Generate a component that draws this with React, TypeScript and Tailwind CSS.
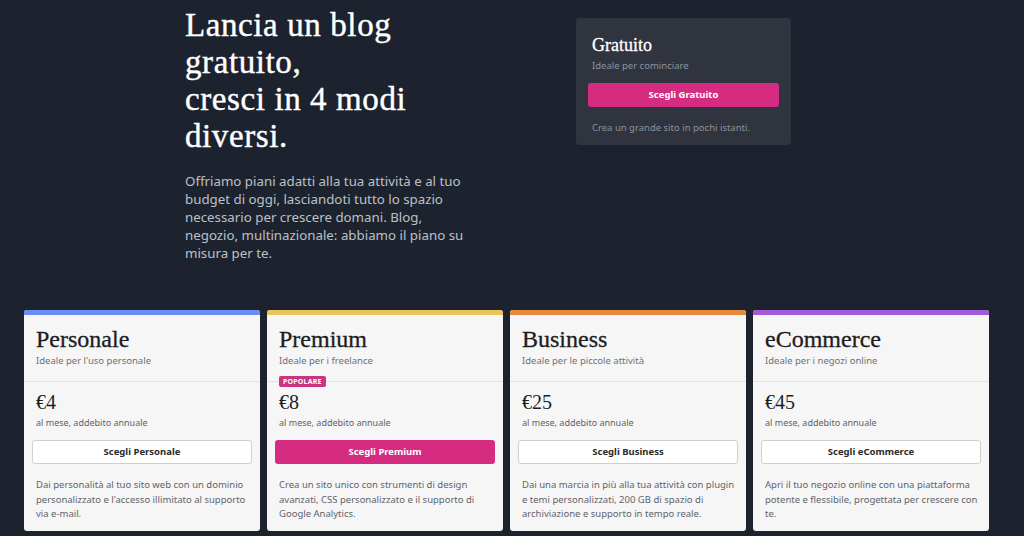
import React from "react";

const serif = { fontFamily: '"Liberation Serif", "DejaVu Serif", serif' };

type Plan = {
  name: string;
  sub: string;
  price: string;
  bar: string;
  cta: string;
  desc: string[];
  primary?: boolean;
  badge?: boolean;
};

const plans: Plan[] = [
  {
    name: "Personale",
    sub: "Ideale per l'uso personale",
    price: "€4",
    bar: "bg-[#6b8cf0]",
    cta: "Scegli Personale",
    desc: [
      "Dai personalità al tuo sito web con un dominio",
      "personalizzato e l'accesso illimitato al supporto",
      "via e-mail.",
    ],
  },
  {
    name: "Premium",
    sub: "Ideale per i freelance",
    price: "€8",
    bar: "bg-[#e9c45c]",
    cta: "Scegli Premium",
    desc: [
      "Crea un sito unico con strumenti di design",
      "avanzati, CSS personalizzato e il supporto di",
      "Google Analytics.",
    ],
    primary: true,
    badge: true,
  },
  {
    name: "Business",
    sub: "Ideale per le piccole attività",
    price: "€25",
    bar: "bg-[#e58a3c]",
    cta: "Scegli Business",
    desc: [
      "Dai una marcia in più alla tua attività con plugin",
      "e temi personalizzati, 200 GB di spazio di",
      "archiviazione e supporto in tempo reale.",
    ],
  },
  {
    name: "eCommerce",
    sub: "Ideale per i negozi online",
    price: "€45",
    bar: "bg-[#a35ad9]",
    cta: "Scegli eCommerce",
    desc: [
      "Apri il tuo negozio online con una piattaforma",
      "potente e flessibile, progettata per crescere con",
      "te.",
    ],
  },
];

function PlanCard({ p }: { p: Plan }) {
  return (
    <div className="flex w-[236px] flex-col overflow-hidden rounded-[3px] bg-[#f6f6f6]">
      <div className={`h-[5px] ${p.bar}`} />
      <div className="relative border-b border-[#e3e3e3] px-3 pt-[10px] pb-[14px]">
        <div
          className="text-[24px] leading-[28px] text-[#1d1d1f] [-webkit-text-stroke:0.3px_#1d1d1f]"
          style={serif}
        >
          {p.name}
        </div>
        <div className="mt-[1px] text-[9.5px] leading-[13px] text-[#6c7077]">{p.sub}</div>
        {p.badge && (
          <div className="absolute left-3 top-[61px] rounded-[2px] bg-[#c9357f] px-[4px] text-[7px] font-bold leading-[11px] tracking-[0.2px] text-white">
            POPOLARE
          </div>
        )}
      </div>
      <div className="flex flex-1 flex-col px-3 pt-[8px] pb-[9px]">
        <div className="text-[20px] leading-[24px] text-[#1d1d1f]" style={serif}>
          {p.price}
        </div>
        <div className="mt-[3px] text-[9px] leading-[12px] text-[#5e6268]">al mese, addebito annuale</div>
        <button
          className={
            p.primary
              ? "-mx-1 mt-[11px] h-[24px] rounded-[3px] bg-[#d52c82] text-[9.5px] font-bold text-white"
              : "-mx-1 mt-[11px] h-[24px] rounded-[3px] border border-[#d0d0d0] bg-white text-[9.5px] font-bold text-[#2a2a2a]"
          }
        >
          {p.cta}
        </button>
        <p className="mt-[14px] whitespace-nowrap text-[9.5px] leading-[14.5px] text-[#5f636a]">
          {p.desc.map((l, i) => (
            <React.Fragment key={i}>
              {l}
              {i < p.desc.length - 1 && <br />}
            </React.Fragment>
          ))}
        </p>
      </div>
    </div>
  );
}

export default function App() {
  return (
    <div
      className="h-[536px] w-[1024px] overflow-hidden bg-[#1d232e]"
      style={{ fontFamily: '"Noto Sans", "Open Sans", sans-serif' }}
    >
      <div className="flex pl-[185px] pt-[7px]">
        <div className="w-[391px]">
          <h1
            className="text-[33px] leading-[37px] tracking-[0.6px] text-white [-webkit-text-stroke:0.4px_white]"
            style={serif}
          >
            Lancia un blog
            <br />
            gratuito,
            <br />
            cresci in 4 modi
            <br />
            diversi.
          </h1>
          <p className="mt-[17px] whitespace-nowrap text-[13.3px] leading-[18px] text-[#bcc0c7]">
            Offriamo piani adatti alla tua attività e al tuo
            <br />
            budget di oggi, lasciandoti tutto lo spazio
            <br />
            necessario per crescere domani. Blog,
            <br />
            negozio, multinazionale: abbiamo il piano su
            <br />
            misura per te.
          </p>
        </div>
        <div className="mt-[11px] h-[127px] w-[215px] rounded-[3px] bg-[#2f343e] px-4 pt-[16px]">
          <div className="text-[18px] leading-[22px] text-white [-webkit-text-stroke:0.3px_white]" style={serif}>
            Gratuito
          </div>
          <div className="mt-[3px] text-[9.5px] leading-[14px] text-[#8e939b]">Ideale per cominciare</div>
          <button className="-mx-1 mt-[10px] h-[24px] w-[191px] rounded-[3px] bg-[#d52c82] text-[9.5px] font-bold text-white">
            Scegli Gratuito
          </button>
          <div className="mt-[14px] text-[9.5px] leading-[14px] text-[#8e939b]">Crea un grande sito in pochi istanti.</div>
        </div>
      </div>
      <div className="mt-[48px] flex gap-[7px] pl-[24px]">
        {plans.map((p) => (
          <PlanCard key={p.name} p={p} />
        ))}
      </div>
    </div>
  );
}
